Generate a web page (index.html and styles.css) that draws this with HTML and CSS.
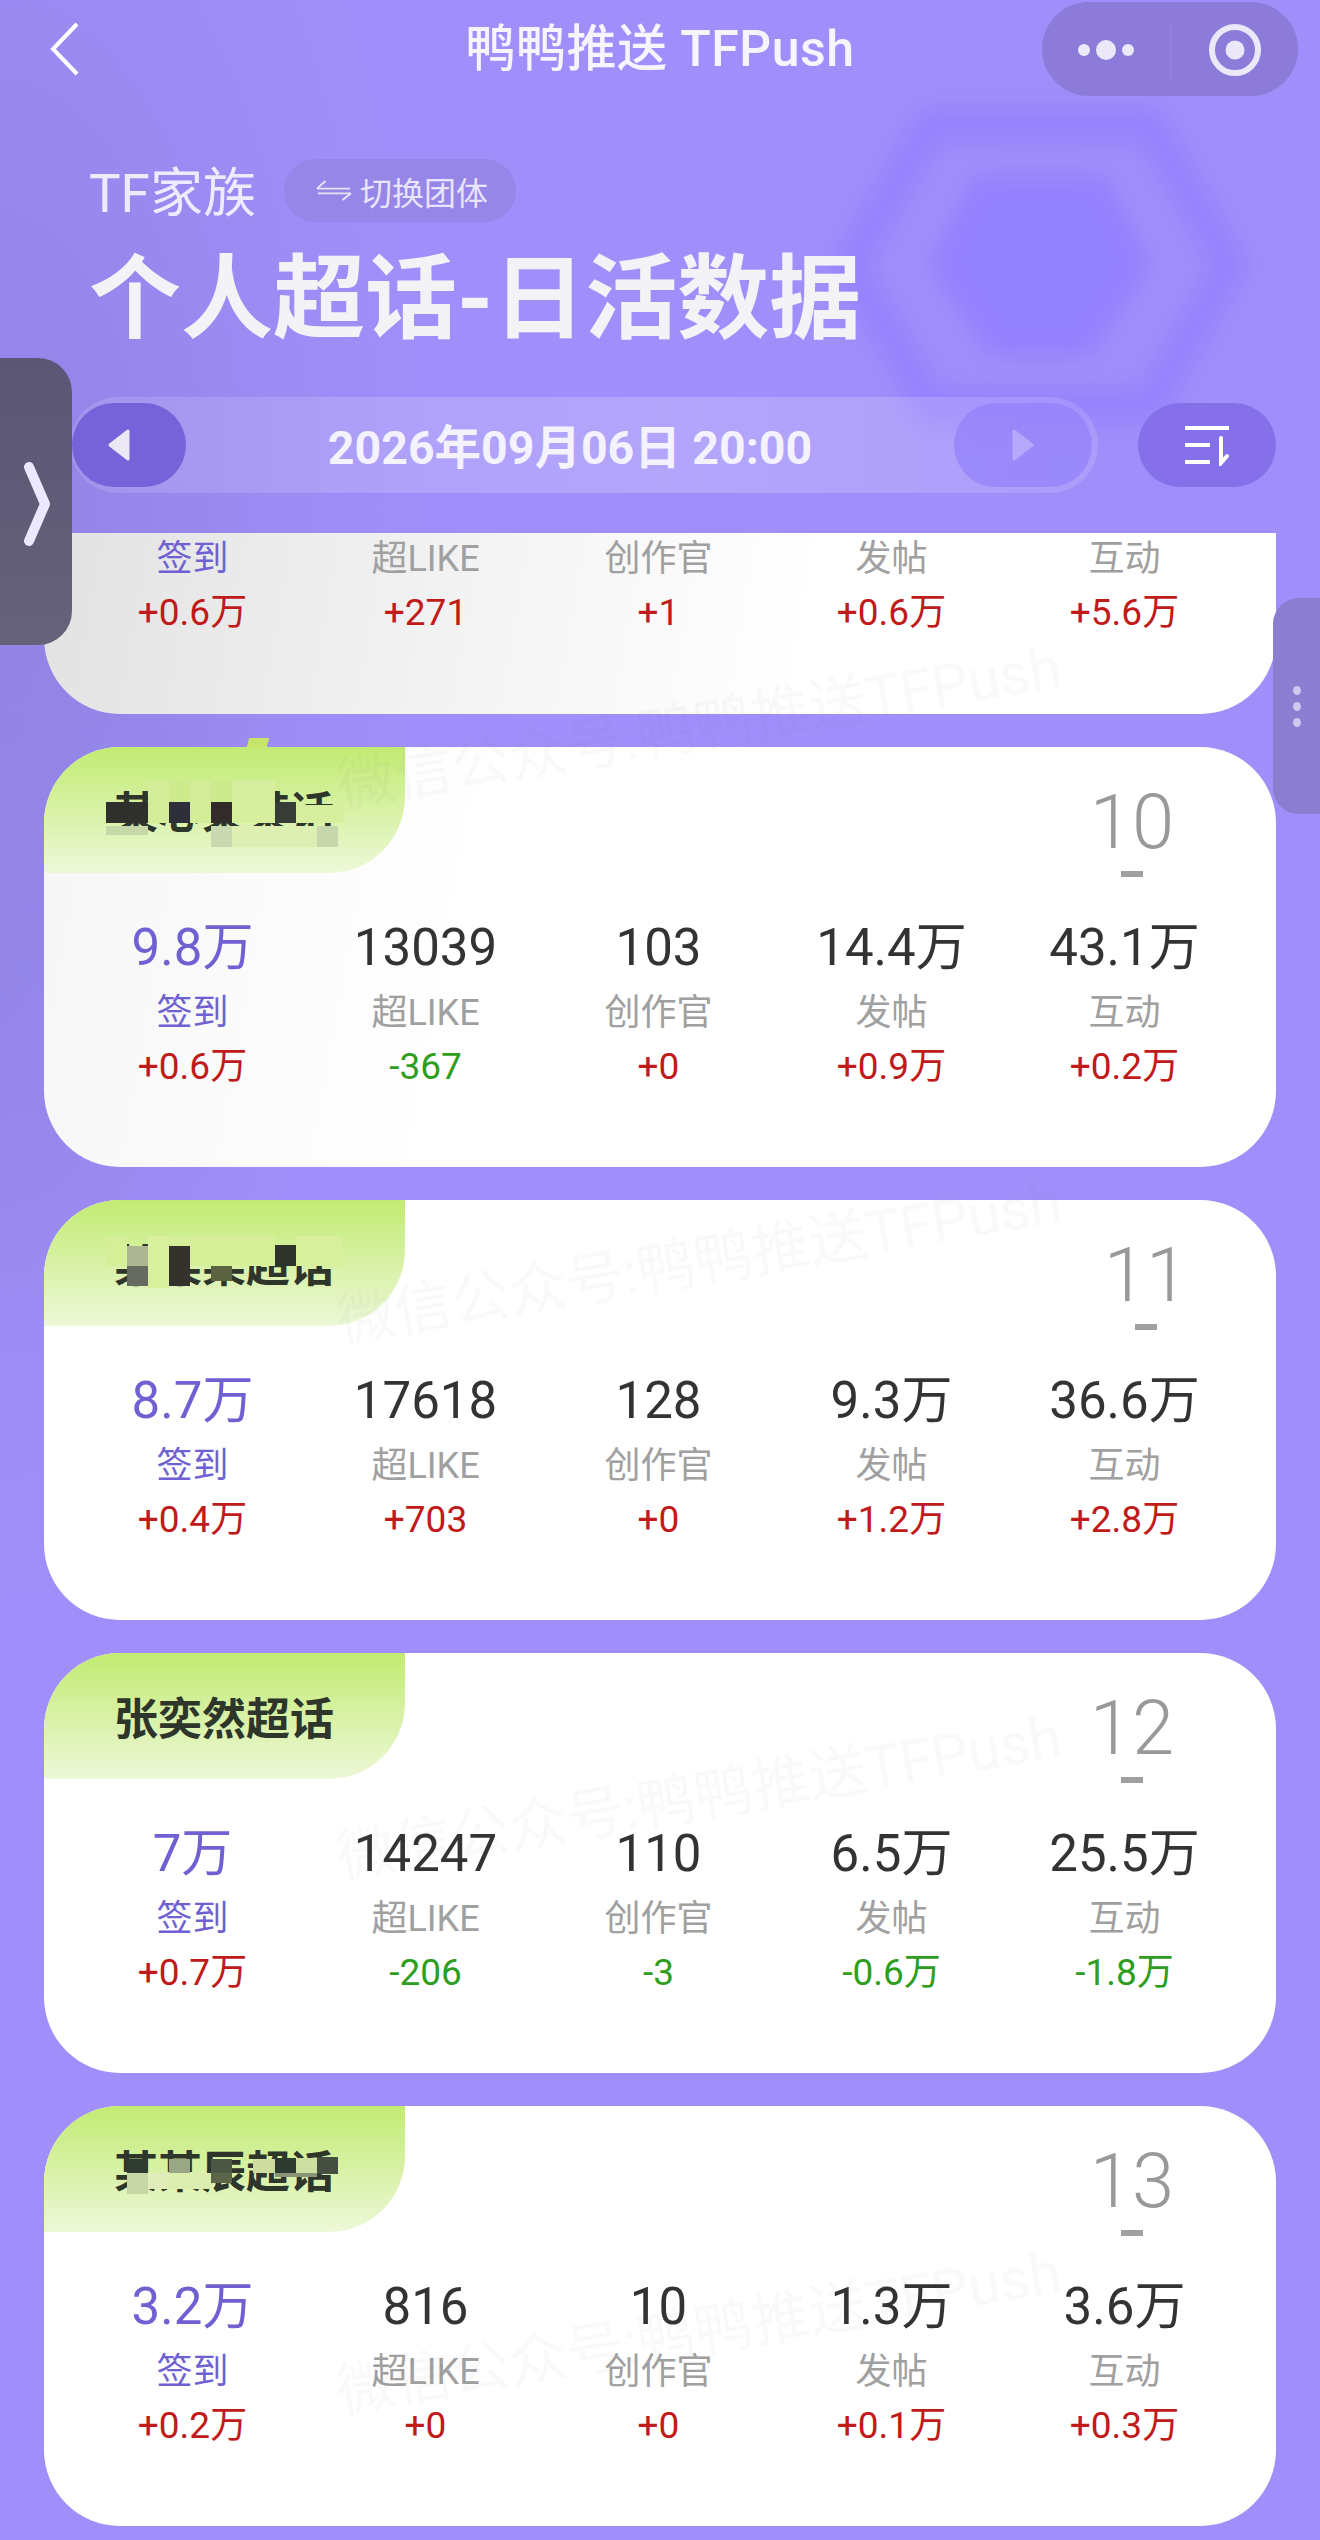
FILE: index.html
```html
<!DOCTYPE html>
<html lang="zh-CN">
<head>
    <meta charset="UTF-8">
    <meta name="viewport" content="width=device-width, initial-scale=1.0">
    <title>个人超话-日活数据</title>
    <link rel="stylesheet" href="styles.css">
</head>
<body>
<div class="page">

    <!-- gem behind the header -->
    <svg class="gem" viewBox="0 0 460 360" width="460" height="360">
        <polygon class="gem-ring" points="120,40 340,40 420,180 340,320 120,320 40,180"/>
        <polygon class="gem-core" points="165,90 295,90 340,180 280,270 180,270 120,180"/>
    </svg>

    <nav class="nav">
        <svg class="nav-back" viewBox="0 0 30 54" width="30" height="54">
            <path d="M27 2 L3 27 L27 52" fill="none" stroke="#fff" stroke-width="4"/>
        </svg>
        <div class="nav-title">鸭鸭推送 TFPush</div>
        <div class="capsule">
            <svg viewBox="0 0 256 94" width="256" height="94">
                <circle cx="42" cy="48" r="6" fill="#ece8fa"/>
                <circle cx="64" cy="48" r="10" fill="#ece8fa"/>
                <circle cx="86" cy="48" r="6" fill="#ece8fa"/>
                <line x1="129" y1="20" x2="129" y2="80" stroke="#9a8ae2" stroke-width="1"/>
                <circle cx="193" cy="48" r="23" fill="none" stroke="#ece8fa" stroke-width="6"/>
                <circle cx="193" cy="48" r="9.5" fill="#ece8fa"/>
            </svg>
        </div>
    </nav>

    <header class="hero">
        <div class="hero-row">
            <span class="hero-group">TF家族</span>
            <span class="switch">
                <svg viewBox="0 0 38 24" width="36" height="23">
                    <path d="M1 10 H36 M1 10 L10 2 M2 15 H37 M37 15 L28 22" fill="none" stroke="#e8e4fb" stroke-width="2"/>
                </svg>
                切换团体
            </span>
        </div>
        <h1 class="hero-title">个人超话-日活数据</h1>
    </header>

    <div class="date-row">
        <div class="date-bar">
            <button class="date-btn date-btn--prev">
                <svg viewBox="0 0 24 34" width="24" height="34"><path d="M21 3 L3 17 L21 31 Z" fill="#ebe8f4" stroke="#ebe8f4" stroke-width="3" stroke-linejoin="round"/></svg>
            </button>
            <span class="date-text">2026年09月06日 20:00</span>
            <button class="date-btn date-btn--next">
                <svg viewBox="0 0 24 34" width="24" height="34"><path d="M3 3 L21 17 L3 31 Z" fill="#b6a8fb" stroke="#b6a8fb" stroke-width="3" stroke-linejoin="round"/></svg>
            </button>
        </div>
        <button class="sort-btn">
            <svg viewBox="0 0 46 42" width="46" height="42">
                <path d="M1 4 H45 M1 21 H26 M1 38 H26" fill="none" stroke="#fff" stroke-width="4"/>
                <path d="M37 14 V39 L43 32" fill="none" stroke="#fff" stroke-width="4" stroke-linecap="round"/>
            </svg>
        </button>
    </div>

    <main class="list">
        <section class="card card--cut">
            <div class="stats">
                <div class="stat stat--main"><div class="stat-label">签到</div><div class="stat-delta up">+0.6万</div></div>
                <div class="stat"><div class="stat-label">超LIKE</div><div class="stat-delta up">+271</div></div>
                <div class="stat"><div class="stat-label">创作官</div><div class="stat-delta up">+1</div></div>
                <div class="stat"><div class="stat-label">发帖</div><div class="stat-delta up">+0.6万</div></div>
                <div class="stat"><div class="stat-label">互动</div><div class="stat-delta up">+5.6万</div></div>
            </div>
        </section>

        <section class="card card--fade">
            <div class="card-head">
                <div class="tab tab--tick">
                    某心某某话
                    <svg class="mosaic" viewBox="0 0 361 126">
                        <rect x="62" y="55" width="42" height="21" fill="#2f2f2b"/>
                        <rect x="104" y="34" width="21" height="42" fill="#d3ec97"/>
                        <rect x="125" y="55" width="21" height="21" fill="#2f2f3a"/>
                        <rect x="146" y="34" width="21" height="42" fill="#d3ec97"/>
                        <rect x="125" y="34" width="21" height="21" fill="#cdea8c"/>
                        <rect x="167" y="34" width="21" height="21" fill="#cdea8c"/>
                        <rect x="167" y="55" width="21" height="21" fill="#322b2b"/>
                        <rect x="188" y="34" width="43" height="42" fill="#d6ee9e"/>
                        <rect x="231" y="55" width="21" height="21" fill="#383c36"/>
                        <rect x="252" y="58" width="48" height="18" fill="#d6ee9e"/>
                        <rect x="62" y="79" width="42" height="9" fill="#c7d8a8"/>
                        <rect x="167" y="79" width="21" height="21" fill="#c9d8ae"/>
                        <rect x="188" y="79" width="85" height="21" fill="#deefb4"/>
                        <rect x="273" y="79" width="21" height="21" fill="#c8d6ab"/>
                    </svg>
                </div>
                <div class="rank"><span class="rank-num">10</span><span class="rank-dash"></span></div>
            </div>
            <div class="stats">
                <div class="stat stat--main"><div class="stat-value">9.8万</div><div class="stat-label">签到</div><div class="stat-delta up">+0.6万</div></div>
                <div class="stat"><div class="stat-value">13039</div><div class="stat-label">超LIKE</div><div class="stat-delta down">-367</div></div>
                <div class="stat"><div class="stat-value">103</div><div class="stat-label">创作官</div><div class="stat-delta up">+0</div></div>
                <div class="stat"><div class="stat-value">14.4万</div><div class="stat-label">发帖</div><div class="stat-delta up">+0.9万</div></div>
                <div class="stat"><div class="stat-value">43.1万</div><div class="stat-label">互动</div><div class="stat-delta up">+0.2万</div></div>
            </div>
        </section>

        <section class="card">
            <div class="card-head">
                <div class="tab">
                    某某某超话
                    <svg class="mosaic" viewBox="0 0 361 126">
                        <rect x="83" y="46" width="21" height="20" fill="#adb592"/>
                        <rect x="83" y="66" width="21" height="20" fill="#666a60"/>
                        <rect x="104" y="36" width="21" height="52" fill="#d8ef9e"/>
                        <rect x="125" y="46" width="21" height="40" fill="#33322c"/>
                        <rect x="125" y="36" width="21" height="10" fill="#d5ee98"/>
                        <rect x="146" y="36" width="85" height="30" fill="#d8ef9a"/>
                        <rect x="167" y="66" width="21" height="15" fill="#5b6342"/>
                        <rect x="231" y="45" width="21" height="21" fill="#30322c"/>
                        <rect x="252" y="36" width="46" height="30" fill="#d8ef9c"/>
                        <rect x="62" y="36" width="21" height="30" fill="#d5ee98"/>
                    </svg>
                </div>
                <div class="rank rank--narrow"><span class="rank-num">11</span><span class="rank-dash"></span></div>
            </div>
            <div class="stats">
                <div class="stat stat--main"><div class="stat-value">8.7万</div><div class="stat-label">签到</div><div class="stat-delta up">+0.4万</div></div>
                <div class="stat"><div class="stat-value">17618</div><div class="stat-label">超LIKE</div><div class="stat-delta up">+703</div></div>
                <div class="stat"><div class="stat-value">128</div><div class="stat-label">创作官</div><div class="stat-delta up">+0</div></div>
                <div class="stat"><div class="stat-value">9.3万</div><div class="stat-label">发帖</div><div class="stat-delta up">+1.2万</div></div>
                <div class="stat"><div class="stat-value">36.6万</div><div class="stat-label">互动</div><div class="stat-delta up">+2.8万</div></div>
            </div>
        </section>

        <section class="card">
            <div class="card-head">
                <div class="tab">张奕然超话</div>
                <div class="rank"><span class="rank-num">12</span><span class="rank-dash"></span></div>
            </div>
            <div class="stats">
                <div class="stat stat--main"><div class="stat-value">7万</div><div class="stat-label">签到</div><div class="stat-delta up">+0.7万</div></div>
                <div class="stat"><div class="stat-value">14247</div><div class="stat-label">超LIKE</div><div class="stat-delta down">-206</div></div>
                <div class="stat"><div class="stat-value">110</div><div class="stat-label">创作官</div><div class="stat-delta down">-3</div></div>
                <div class="stat"><div class="stat-value">6.5万</div><div class="stat-label">发帖</div><div class="stat-delta down">-0.6万</div></div>
                <div class="stat"><div class="stat-value">25.5万</div><div class="stat-label">互动</div><div class="stat-delta down">-1.8万</div></div>
            </div>
        </section>

        <section class="card">
            <div class="card-head">
                <div class="tab">
                    某某辰超话
                    <svg class="mosaic" viewBox="0 0 361 126">
                        <rect x="83" y="53" width="21" height="14" fill="#2f3a30"/>
                        <rect x="83" y="67" width="21" height="21" fill="#c6d6a6"/>
                        <rect x="104" y="67" width="21" height="16" fill="#e0ecb9"/>
                        <rect x="125" y="53" width="21" height="14" fill="#9aa785"/>
                        <rect x="125" y="67" width="42" height="16" fill="#dbeeb0"/>
                        <rect x="167" y="53" width="21" height="14" fill="#4c5645"/>
                        <rect x="167" y="67" width="21" height="10" fill="#5d6549"/>
                        <rect x="209" y="53" width="22" height="14" fill="#cfdca0"/>
                        <rect x="231" y="52" width="21" height="15" fill="#2d3a30"/>
                        <rect x="231" y="67" width="42" height="4" fill="#8a9377"/>
                        <rect x="252" y="52" width="21" height="15" fill="#cddfa0"/>
                        <rect x="273" y="51" width="21" height="17" fill="#454e40"/>
                    </svg>
                </div>
                <div class="rank"><span class="rank-num">13</span><span class="rank-dash"></span></div>
            </div>
            <div class="stats">
                <div class="stat stat--main"><div class="stat-value">3.2万</div><div class="stat-label">签到</div><div class="stat-delta up">+0.2万</div></div>
                <div class="stat"><div class="stat-value">816</div><div class="stat-label">超LIKE</div><div class="stat-delta up">+0</div></div>
                <div class="stat"><div class="stat-value">10</div><div class="stat-label">创作官</div><div class="stat-delta up">+0</div></div>
                <div class="stat"><div class="stat-value">1.3万</div><div class="stat-label">发帖</div><div class="stat-delta up">+0.1万</div></div>
                <div class="stat"><div class="stat-value">3.6万</div><div class="stat-label">互动</div><div class="stat-delta up">+0.3万</div></div>
            </div>
        </section>
    </main>

    <!-- side handles -->
    <div class="side-open">
        <svg viewBox="0 0 30 84" width="30" height="84">
            <path d="M5 5 L21 42 L5 79" fill="none" stroke="#ece8ff" stroke-width="10" stroke-linecap="round" stroke-linejoin="round"/>
        </svg>
    </div>
    <div class="side-more"><i></i><i></i><i></i></div>

    <!-- watermark over the list -->
    <div class="watermarks">
        <div class="watermark">微信公众号:鸭鸭推送TFPush</div>
        <div class="watermark">微信公众号:鸭鸭推送TFPush</div>
        <div class="watermark">微信公众号:鸭鸭推送TFPush</div>
        <div class="watermark">微信公众号:鸭鸭推送TFPush</div>
    </div>
</div>
</body>
</html>
```
FILE: styles.css
```css
* {
    box-sizing: border-box;
}
body {
    margin: 0;
    font-family: Roboto, "Noto Sans CJK SC", sans-serif;
    background: #a08ffa;
}
button {
    border: none;
    padding: 0;
    font: inherit;
}
.page {
    position: relative;
    height: 2540px;
    overflow: hidden;
    padding-top: 2px;
    background:
        radial-gradient(ellipse 420px 900px at 0 520px, rgba(120, 110, 190, 0.35), rgba(120, 110, 190, 0) 100%),
        radial-gradient(ellipse 300px 600px at 0 1000px, rgba(120, 110, 190, 0.16), rgba(120, 110, 190, 0) 100%),
        #a08ffa;
}

/* gem */
.gem {
    position: absolute;
    left: 810px;
    top: 85px;
    filter: blur(11px);
}
.gem-ring {
    fill: none;
    stroke: #9683fd;
    stroke-width: 36;
    stroke-linejoin: round;
}
.gem-core {
    fill: #9380fe;
}

/* nav */
.nav {
    position: relative;
    display: grid;
    grid-template-columns: 1fr auto 1fr;
    align-items: center;
    height: 94px;
    padding: 0 22px;
}
.nav-back {
    margin-left: 28px;
}
.nav-title {
    font-size: 50px;
    font-weight: 500;
    letter-spacing: 0.5px;
    color: #f6f4ff;
    line-height: 94px;
}
.capsule {
    justify-self: end;
    width: 256px;
    height: 94px;
    border-radius: 47px;
    background: #8c7bd9;
}
.capsule svg {
    display: block;
}

/* hero */
.hero {
    position: relative;
    padding-left: 89px;
    margin-top: 63px;
}
.hero-row {
    display: flex;
    align-items: center;
    height: 63px;
}
.hero-group {
    padding-bottom: 4px;
    font-size: 53px;
    color: #eeebff;
}
.switch {
    display: flex;
    align-items: center;
    gap: 8px;
    height: 63px;
    margin-left: 28px;
    padding: 0 28px 0 32px;
    border-radius: 32px;
    background: #9686e8;
    color: #e8e4fb;
    font-size: 32px;
}
.hero-title {
    margin: 27px 0 0;
    font-size: 92px;
    font-weight: 700;
    line-height: 102px;
    color: #f3f2f7;
}

/* date */
.date-row {
    position: relative;
    display: flex;
    align-items: center;
    margin-top: 46px;
    padding-left: 70px;
}
.date-bar {
    display: flex;
    align-items: center;
    justify-content: space-between;
    width: 1028px;
    height: 96px;
    padding: 0 6px 0 2px;
    border-radius: 48px;
    background: linear-gradient(90deg, rgba(255, 255, 255, 0.12), rgba(255, 255, 255, 0.2) 60%, rgba(255, 255, 255, 0.12));
}
.date-btn {
    display: flex;
    align-items: center;
    justify-content: center;
    height: 84px;
    border-radius: 42px;
}
.date-btn--prev {
    width: 114px;
    padding-right: 20px;
    background: #7663d9;
}
.date-btn--next {
    width: 138px;
    background: rgba(140, 120, 250, 0.55);
}
.date-text {
    margin-bottom: 3px;
    font-size: 46.5px;
    font-weight: 700;
    color: #f4f2ff;
}
.sort-btn {
    display: flex;
    align-items: center;
    justify-content: center;
    width: 138px;
    height: 84px;
    margin-left: 40px;
    border-radius: 42px;
    background: #8570ea;
}

/* cards */
.list {
    position: relative;
    display: flex;
    flex-direction: column;
    gap: 33px;
    margin-top: 40px;
    padding: 0 44px;
}
.card {
    height: 420px;
    border-radius: 76px;
    background: #fff;
}
.card--cut {
    height: 181px;
    border-radius: 0 0 76px 76px;
    background: linear-gradient(100deg, #e2e2e2, #f5f5f5 38%, #fff 62%);
}
.card--cut .stats {
    padding-top: 0;
    margin-top: -9px;
}
.card--fade {
    background: linear-gradient(100deg, #f6f6f6, #fff 35%);
}
.card-head {
    display: flex;
    justify-content: space-between;
    height: 126px;
}
.tab {
    position: relative;
    width: 361px;
    height: 126px;
    padding: 9px 0 0 70px;
    border-radius: 76px 0 76px 0;
    background: linear-gradient(180deg, #c2eb72, #edf8d8);
    color: #2e352a;
    font-size: 44px;
    font-weight: 700;
    line-height: 117px;
}
.tab--tick::after {
    content: "";
    position: absolute;
    left: 204px;
    top: -9px;
    width: 20px;
    height: 9px;
    background: #c4e56a;
    transform: skewX(-15deg);
}
.mosaic {
    position: absolute;
    left: 0;
    top: 0;
    width: 361px;
    height: 126px;
}
.rank {
    display: flex;
    flex-direction: column;
    align-items: center;
    width: 100px;
    margin-right: 94px;
    padding-top: 36px;
}
.rank--narrow {
    margin-right: 80px;
}
.rank-num {
    flex: none;
    font-size: 76px;
    font-weight: 300;
    line-height: 78px;
    color: #999;
}
.rank-dash {
    flex: none;
    width: 22px;
    height: 6px;
    margin-top: 10px;
    background: #a0a0a0;
}

.stats {
    display: grid;
    grid-template-columns: repeat(5, 233px);
    padding: 45px 0 0 32px;
    text-align: center;
}
.stat-value {
    font-size: 51px;
    line-height: 60px;
    color: #333;
}
.stat-label {
    margin-top: 5px;
    font-size: 36px;
    line-height: 60px;
    color: #a0a0a0;
}
.stat-delta {
    font-size: 37px;
    line-height: 48px;
}
.stat--main .stat-value,
.stat--main .stat-label {
    color: #7061d3;
}
.up {
    color: #c01a1a;
}
.down {
    color: #2f9e1f;
}

/* side handles */
.side-open {
    position: absolute;
    left: 0;
    top: 358px;
    width: 72px;
    height: 287px;
    padding: 104px 0 0 24px;
    border-radius: 0 34px 34px 0;
    background: linear-gradient(180deg, #5b5675, #65627a);
}
.side-more {
    position: absolute;
    right: 0;
    top: 598px;
    display: flex;
    flex-direction: column;
    justify-content: center;
    align-items: center;
    gap: 7px;
    width: 47px;
    height: 216px;
    border-radius: 26px 0 0 26px;
    background: #8b7dcf;
}
.side-more i {
    width: 8px;
    height: 9px;
    border-radius: 50%;
    background: #cfc8ee;
}

/* watermark */
.watermarks {
    position: absolute;
    left: 0;
    right: 0;
    top: 460px;
    padding-left: 78px;
    pointer-events: none;
}
.watermark {
    height: 535px;
    line-height: 535px;
    text-align: center;
    font-size: 58px;
    color: rgba(110, 100, 130, 0.04);
    transform: rotate(-9.5deg);
}
```
